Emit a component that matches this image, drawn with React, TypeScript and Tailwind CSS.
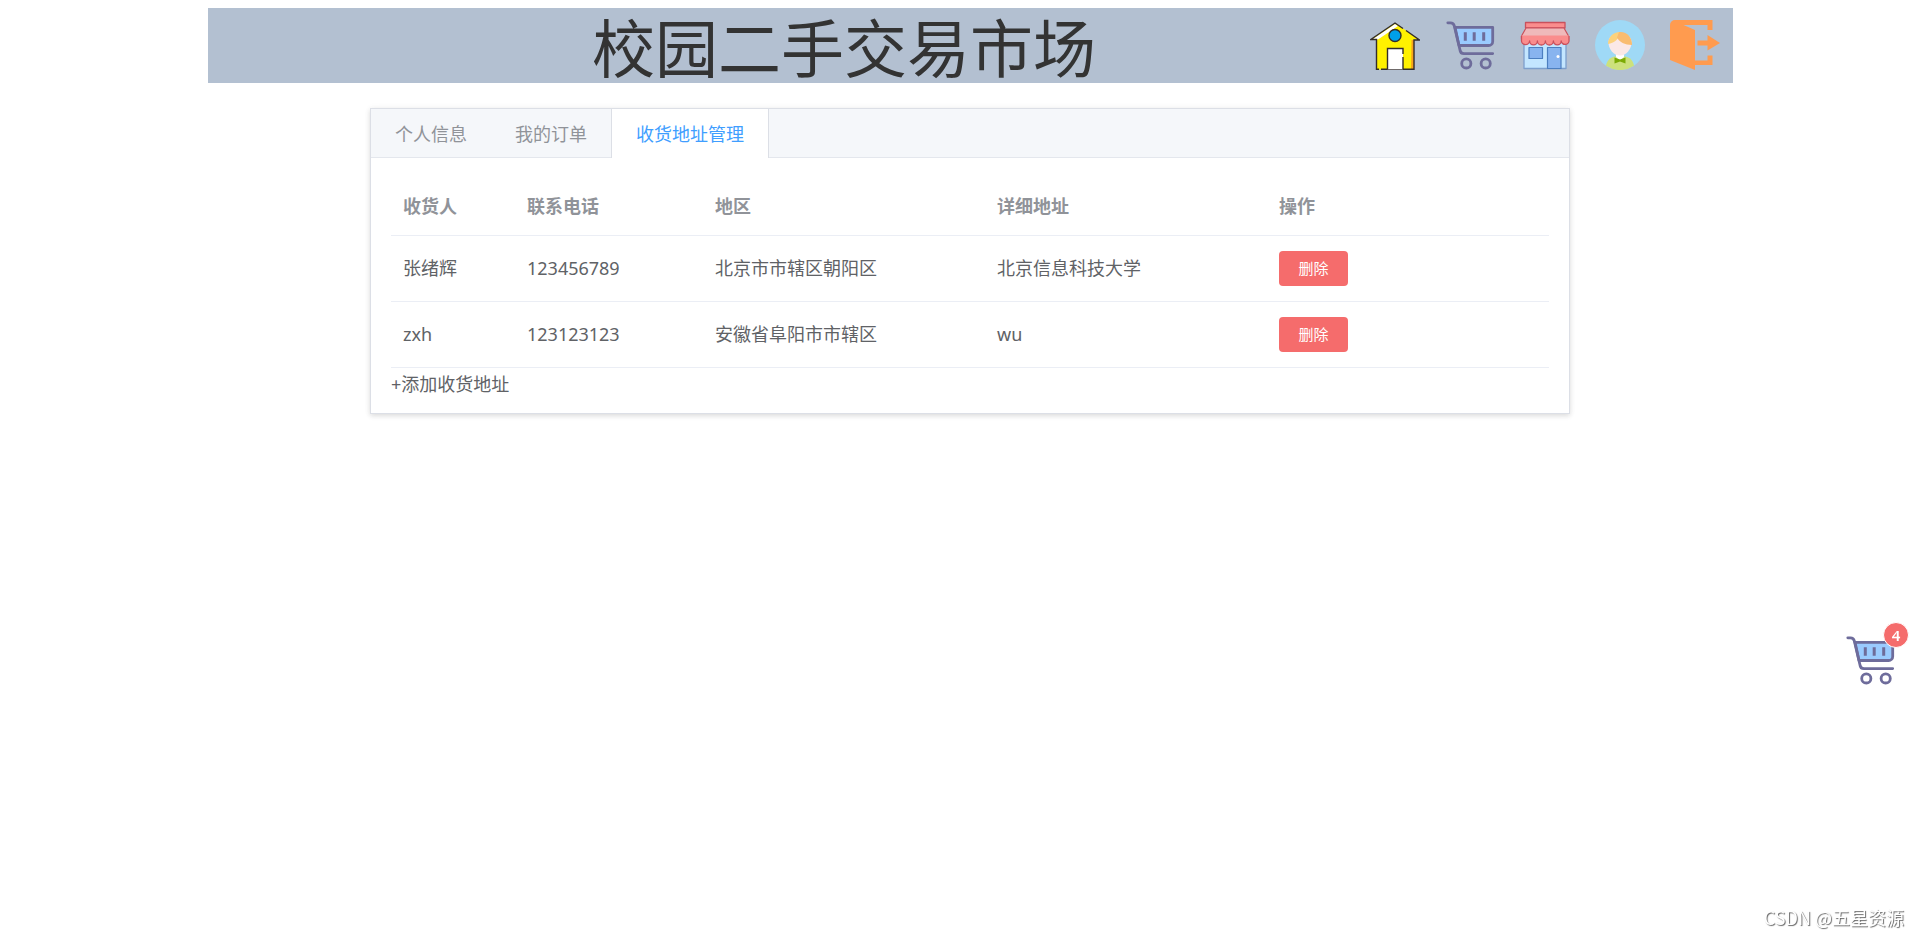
import { useState } from "react";

interface Address {
  id: number;
  receiver: string;
  phone: string;
  region: string;
  detail: string;
}

const initialAddresses: Address[] = [
  { id: 1, receiver: "张绪辉", phone: "123456789", region: "北京市市辖区朝阳区", detail: "北京信息科技大学" },
  { id: 2, receiver: "zxh", phone: "123123123", region: "安徽省阜阳市市辖区", detail: "wu" },
];

const tabs = ["个人信息", "我的订单", "收货地址管理"];

function HomeIcon() {
  return (
    <svg viewBox="0 0 50 50" className="size-[50px]">
      <path d="M6 20V49.500H44V20L25 5Z" fill="#fff100" />
      <path d="M41.500 20h2.500v29.500h-3z" fill="#f8a51b" />
      <path d="M1 19.500 25 3 49 19.500H43L25 7 7 19.500Z" fill="#fff100" />
      <path d="M3 19 25 4l3 2L8 19.500Z" fill="#fff" />
      <path
        d="M11 49.300H44V20h5.500L36 10.500M33 8.500 25 3 .8 19.500H6.500V49.300H9"
        fill="none"
        stroke="#332c2b"
        strokeWidth="1.400"
      />
      <circle cx="25" cy="15.500" r="6" fill="#00a0e9" stroke="#332c2b" strokeWidth="1.400" />
      <path d="M17.500 49.300V28.500H33V49.300" fill="#fff" />
      <path d="M17.500 49.300V28.500H33V34M33 37V49.300" fill="none" stroke="#332c2b" strokeWidth="1.400" />
    </svg>
  );
}

function CartIcon() {
  return (
    <svg
      viewBox="0 0 50 50"
      className="size-[50px]"
      fill="none"
      stroke="#6e6c9b"
      strokeWidth="2.800"
      strokeLinecap="round"
      strokeLinejoin="round"
    >
      <path d="M10 7.300H47.700V21.500a4 4 0 0 1-4 4H14Z" fill="#9acbff" />
      <path d="M2.800 2.800h2.500a4 4 0 0 1 4 3L15 30a4 4 0 0 0 4 3.600H47.700" />
      <path d="M20.300 12.300v8.400M29.200 12.300v8.400M38.700 12.300v8.400" strokeLinecap="butt" strokeWidth="3" />
      <circle cx="21.300" cy="43.400" r="4.600" />
      <circle cx="40.700" cy="43.400" r="4.600" />
    </svg>
  );
}

function ShopIcon() {
  return (
    <svg viewBox="0 0 50 50" className="size-[50px]" strokeLinejoin="round">
      <path d="M4 20H46V48.500H4Z" fill="#c3e6ff" stroke="#7d9fcc" strokeWidth="1.300" />
      <path d="M9 27.500H22.500V38.500H9Z" fill="#88b4ef" stroke="#4c7fc0" strokeWidth="1.200" />
      <path d="M27.500 27.500H41V48.500H27.500Z" fill="#88b4ef" stroke="#4c7fc0" strokeWidth="1.200" />
      <circle cx="38" cy="36.500" r="1.500" fill="#fff" />
      <path d="M5.500 2.500H45V8H5.500Z" fill="#fa8d8d" stroke="#c9515c" strokeWidth="1.300" />
      <path d="M6 8H44L48.500 16V19H1.500V16Z" fill="#efb9ba" stroke="#c9515c" strokeWidth="1.200" />
      <path
        d="M1.500 15.500H49V20a3.900 3.900 0 0 1-7.800 1 3.900 3.900 0 0 1-7.800 0 4 4 0 0 1-8 0 4 4 0 0 1-8 0 3.900 3.900 0 0 1-7.800 0 3.900 3.900 0 0 1-8.100-1Z"
        fill="#fa8d8d"
      />
      <path
        d="M1.500 16V20a3.900 3.900 0 0 0 8.100 1 3.900 3.900 0 0 0 7.800 0 4 4 0 0 0 8 0 4 4 0 0 0 8 0 3.900 3.900 0 0 0 7.800 0 3.900 3.900 0 0 0 7.800-1V16"
        fill="none"
        stroke="#c9515c"
        strokeWidth="1.300"
      />
    </svg>
  );
}

function UserIcon() {
  return (
    <svg viewBox="0 0 50 50" className="size-[50px]">
      <circle cx="25" cy="25" r="25" fill="#9fd9f6" />
      <path d="M11 45.800C12 39 17 36 25 36s13 3 14 9.800A25 25 0 0 1 11 45.800Z" fill="#cde17c" />
      <path d="M21 33h8v4l-4 4-4-4Z" fill="#fff" />
      <path d="M13.500 22a11.500 13.500 0 0 0 23 0c0-5-5-9-11.500-9s-11.500 4-11.500 9Z" fill="#fbe8e6" />
      <path d="M25 12c-7 0-12 5-12 12 6-1 11-5 13-11Z" fill="#fcd27c" />
      <path d="M24 12c8-.8 13 5 13 13-7 0-13-3-15-7.500Z" fill="#f9bc70" />
      <path d="m19.500 37.500 5.500 2 5.500-2v6l-5.500-2-5.500 2Z" fill="#7cab05" />
    </svg>
  );
}

function ExitIcon() {
  return (
    <svg viewBox="0 0 50 50" className="size-[50px]" fill="#ff9b4f">
      <path d="M5 0H42.500V10H37.500V5H13.500L25 10V50L0 40V5a5 5 0 0 1 5-5Z" />
      <path d="M27.500 20.500H37.500V15L50 23 37.500 30.500V25.500H27.500Z" />
      <path d="M37.500 35.500H42.500V45H25V40.500H37.500Z" />
    </svg>
  );
}

const navItems = [
  { label: "首页", icon: <HomeIcon /> },
  { label: "购物车", icon: <CartIcon /> },
  { label: "店铺", icon: <ShopIcon /> },
  { label: "个人中心", icon: <UserIcon /> },
  { label: "退出", icon: <ExitIcon /> },
];

export default function App() {
  const [activeTab, setActiveTab] = useState(2);
  const [addresses, setAddresses] = useState(initialAddresses);

  const handleDelete = (id: number) => {
    setAddresses(addresses.filter((item) => item.id !== id));
  };

  return (
    <div className="min-h-screen bg-white pt-2 font-['Noto_Sans','Noto_Sans_CJK_SC',sans-serif] text-[18px] leading-6 text-[#606266]">
      <div className="flex justify-center pl-[21px]">
        <header className="flex h-[75px] w-full max-w-[1525px] items-start bg-[#b3c0d1] pr-[13px]">
          <h1 className="flex-1 pl-[110px] text-center text-[63px] leading-[79px] text-[#333]">
            校园二手交易市场
          </h1>
          <nav className="flex gap-[25px] pt-3">
            {navItems.map((item) => (
              <a key={item.label} href="#" aria-label={item.label}>
                {item.icon}
              </a>
            ))}
          </nav>
        </header>
      </div>

      <main className="flex justify-center pt-[25px] pl-5">
        <section className="w-full max-w-[1200px] border border-[#dcdfe6] bg-white shadow-[0_2px_5px_rgba(0,0,0,0.12),0_0_8px_rgba(0,0,0,0.04)]">
          <div role="tablist" className="flex h-[49px] border-b border-[#e4e7ed] bg-[#f5f7fa]">
            {tabs.map((tab, index) => (
              <button
                key={tab}
                role="tab"
                aria-selected={index === activeTab}
                onClick={() => setActiveTab(index)}
                className={`-mb-px cursor-pointer px-6 ${
                  index === activeTab
                    ? "border-x border-[#dcdfe6] bg-white text-[#409eff]"
                    : "border-b border-[#e4e7ed] pt-px text-[#909399]"
                }`}
              >
                {tab}
              </button>
            ))}
          </div>

          <div className="px-5 pt-[19px] pb-[17px]">
            <table className="w-full table-fixed text-left">
              <colgroup>
                <col className="w-[124px]" />
                <col className="w-[188px]" />
                <col className="w-[282px]" />
                <col className="w-[282px]" />
                <col />
              </colgroup>
              <thead className="text-[#909399]">
                <tr className="h-[58px] border-b border-[#ebeef5]">
                  <th className="px-3">收货人</th>
                  <th className="px-3">联系电话</th>
                  <th className="px-3">地区</th>
                  <th className="px-3">详细地址</th>
                  <th className="px-3">操作</th>
                </tr>
              </thead>
              <tbody>
                {addresses.map((item) => (
                  <tr key={item.id} className="h-[66px] border-b border-[#ebeef5]">
                    <td className="px-3">{item.receiver}</td>
                    <td className="px-3">{item.phone}</td>
                    <td className="px-3">{item.region}</td>
                    <td className="px-3">{item.detail}</td>
                    <td className="px-3">
                      <button
                        onClick={() => handleDelete(item.id)}
                        className="block h-[35px] w-[69px] cursor-pointer rounded bg-[#f56c6c] text-[15px] text-white"
                      >
                        删除
                      </button>
                    </td>
                  </tr>
                ))}
              </tbody>
            </table>
            <button className="block cursor-pointer pt-1">+添加收货地址</button>
          </div>
        </section>
      </main>

      <a href="#" aria-label="购物车" className="fixed right-[25px] bottom-[252px]">
        <CartIcon />
        <span className="absolute -top-[13px] -right-3.5 flex size-[26px] items-center justify-center rounded-full border border-white bg-[#f56c6c] text-[15px] font-semibold text-white">
          4
        </span>
      </a>

      <footer className="fixed right-4 bottom-2 font-['Noto_Sans_CJK_SC',sans-serif] text-white [text-shadow:1px_1px_1px_#666]">
        CSDN @五星资源
      </footer>
    </div>
  );
}
